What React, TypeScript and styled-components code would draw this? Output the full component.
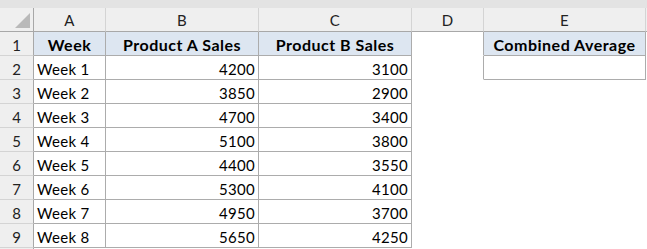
import styled, { createGlobalStyle } from "styled-components";

const GlobalStyle = createGlobalStyle`
  html, body {
    margin: 0;
    padding: 0;
    background: #ffffff;
  }
  body {
    font-family: Lato, "Liberation Sans", sans-serif;
  }
`;

const FORMULA_STRIP = "#e3e3e3";
const HEADER_BG = "#efefef";
const HEADER_LINE = "#d4d4d4";
const HEADER_EDGE = "#a8a8a8";
const CELL_LINE = "#acacac";
const TITLE_BG = "#dde6f1";

const Page = styled.div`
  width: 647px;
  height: 249px;
  overflow: hidden;
  background: #fff;
`;

const Strip = styled.div`
  height: 8px;
  background: ${FORMULA_STRIP};
`;

const Sheet = styled.div`
  display: grid;
  grid-template-columns: 34px 72px 153px 153px 72px 162px 1fr;
  grid-auto-rows: 24px;
`;

const Corner = styled.div`
  box-sizing: border-box;
  background: ${HEADER_BG};
  border-right: 1px solid ${HEADER_EDGE};
  border-bottom: 1px solid ${HEADER_EDGE};
  display: flex;
  align-items: flex-end;
  justify-content: flex-end;
  padding: 0 3px 3px 0;
`;

const ColHead = styled.div`
  box-sizing: border-box;
  background: ${HEADER_BG};
  border-right: 1px solid ${HEADER_LINE};
  border-bottom: 1px solid ${HEADER_EDGE};
  display: flex;
  align-items: center;
  justify-content: center;
  font-size: 15px;
  letter-spacing: 0.3px;
  color: #222;
  padding-top: 1px;
`;

const RowHead = styled.div`
  box-sizing: border-box;
  background: ${HEADER_BG};
  border-right: 1px solid ${HEADER_EDGE};
  border-bottom: 1px solid ${HEADER_LINE};
  display: flex;
  align-items: center;
  justify-content: center;
  font-size: 15px;
  color: #222;
  padding-top: 2px;
`;

type CellProps = {
  $boxed?: boolean;
  $edge?: boolean;
  $title?: boolean;
  $align?: "left" | "right" | "center";
};

const Cell = styled.div<CellProps>`
  box-sizing: border-box;
  background: ${(p) => (p.$title ? TITLE_BG : "#fff")};
  border-right: 1px solid
    ${(p) => (p.$boxed || p.$edge ? CELL_LINE : "transparent")};
  border-bottom: 1px solid ${(p) => (p.$boxed ? CELL_LINE : "transparent")};
  display: flex;
  align-items: center;
  justify-content: ${(p) =>
    p.$align === "right"
      ? "flex-end"
      : p.$align === "center"
      ? "center"
      : "flex-start"};
  padding: 2px 3px 0 3px;
  font-size: ${(p) => (p.$title ? "16px" : "15px")};
  letter-spacing: ${(p) => (p.$title ? "0.5px" : "0.3px")};
  font-weight: ${(p) => (p.$title ? 700 : 400)};
  color: #000;
  white-space: nowrap;
`;

const columns = ["A", "B", "C", "D", "E"];

const rows = [
  ["Week 1", 4200, 3100],
  ["Week 2", 3850, 2900],
  ["Week 3", 4700, 3400],
  ["Week 4", 5100, 3800],
  ["Week 5", 4400, 3550],
  ["Week 6", 5300, 4100],
  ["Week 7", 4950, 3700],
  ["Week 8", 5650, 4250],
] as const;

const SelectAll = () => (
  <svg width="16" height="16" viewBox="0 0 16 16">
    <polygon points="1,16 16,1 16,16" fill="#b9b9b9" />
  </svg>
);

const App = () => {
  return (
    <Page>
      <GlobalStyle />
      <Strip />
      <Sheet>
        <Corner>
          <SelectAll />
        </Corner>
        {columns.map((c) => (
          <ColHead key={c}>{c}</ColHead>
        ))}
        <ColHead />

        <RowHead>1</RowHead>
        <Cell $boxed $title $align="center">
          Week
        </Cell>
        <Cell $boxed $title $align="center">
          Product A Sales
        </Cell>
        <Cell $boxed $title $align="center">
          Product B Sales
        </Cell>
        <Cell $edge />
        <Cell $boxed $title $align="center">
          Combined Average
        </Cell>
        <Cell />

        {rows.map(([week, a, b], i) => (
          <>
            <RowHead key={`h${i}`}>{i + 2}</RowHead>
            <Cell $boxed>{week}</Cell>
            <Cell $boxed $align="right">
              {a}
            </Cell>
            <Cell $boxed $align="right">
              {b}
            </Cell>
            <Cell $edge={i === 0} />
            <Cell $boxed={i === 0} />
            <Cell />
          </>
        ))}

        <RowHead>10</RowHead>
        <Cell />
        <Cell />
        <Cell />
        <Cell />
        <Cell />
        <Cell />
      </Sheet>
    </Page>
  );
};

export default App;
